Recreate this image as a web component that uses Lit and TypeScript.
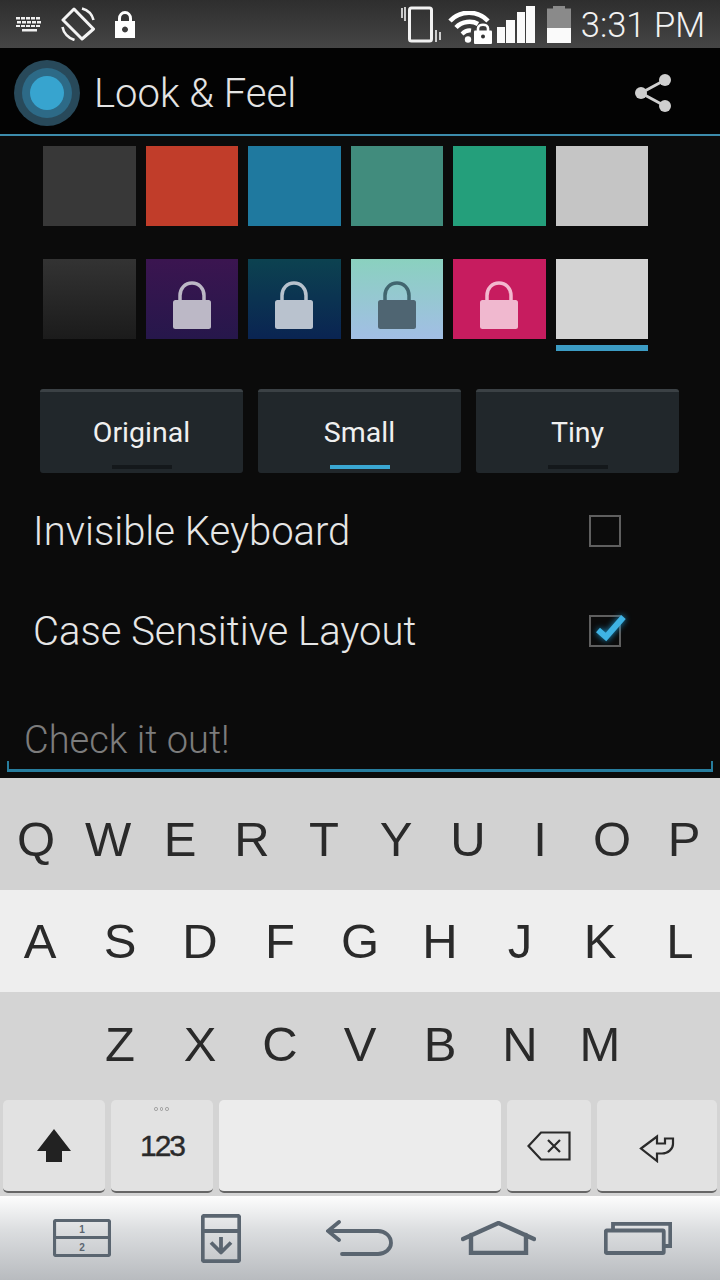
import { LitElement, html, css, svg } from "lit";
import { customElement } from "lit/decorators.js";

const lock = (cls: string) => html`<svg class="lock ${cls}" width="38" height="48" viewBox="0 0 38 48">
  <path class="shackle" d="M7 21V14.500C7 7.500 12 2 19 2S31 7.500 31 14.500V21" fill="none" stroke-width="3.500"/>
  <rect class="body" x="0" y="19" width="38" height="29" rx="2.500"/>
</svg>`;

const row1 = ["s-grey", "s-red", "s-blue", "s-teal", "s-green", "s-silver"];
const row2: [string, string][] = [
  ["g-dark", ""], ["g-purple", "l-purple"], ["g-navy", "l-navy"], ["g-aqua", "l-aqua"], ["g-pink", "l-pink"], ["g-light", ""],
];

@customElement("app-root")
export class AppRoot extends LitElement {
  static styles = css`
    :host { display: flex; flex-direction: column; width: 720px; height: 1280px; overflow: hidden; background: #0b0b0b; font-family: Roboto, sans-serif; }
    .status { height: 48px; flex: none; box-sizing: border-box; display: flex; align-items: center; padding: 0 15px 0 16px; background: linear-gradient(#2e2e2e, #454545); color: #fff; }
    .status svg { display: block; flex: none; }
    .st-rot { margin-left: 17px; } .st-lock { margin-left: 20px; }
    .st-spacer { flex: 1; }
    .st-wifi { margin-left: 7px; margin-top: 6px; } .st-sig { margin-left: 4px; } .st-bat { margin-left: 12px; }
    .time { margin-left: 10px; padding-top: 3px; font-size: 34.500px; font-weight: 300; line-height: 45px; white-space: nowrap; color: #f2f2f2; }
    .appbar { height: 86px; flex: none; box-sizing: border-box; display: flex; align-items: center; background: #030303; padding: 4px 46px 0 14px; }
    .rule { height: 2px; flex: none; background: #3c8bab; }
    .title { margin-left: 14px; font-size: 40px; font-weight: 300; color: #e4e4e4; flex: 1; white-space: nowrap; }
    .main { flex: none; height: 642px; box-sizing: border-box; padding-top: 10px; display: flex; flex-direction: column; background: #0b0b0b; }
    .swatches { display: grid; grid-template-columns: repeat(6, 92.500px); column-gap: 10px; row-gap: 33px; margin-left: 43px; }
    .sw { height: 80px; position: relative; display: flex; justify-content: center; align-items: flex-end; box-sizing: border-box; padding-bottom: 10px; }
    .s-grey { background: #383838; } .s-red { background: #c13d2a; } .s-blue { background: #1f799f; }
    .s-teal { background: #418c7d; } .s-green { background: #249f7b; } .s-silver { background: #c5c5c5; }
    .g-dark { background: linear-gradient(#333, #1b1b1b); }
    .g-purple { background: linear-gradient(#3b1550, #26174b); }
    .g-navy { background: linear-gradient(#0c4250, #0a2452); }
    .g-aqua { background: linear-gradient(#8ad1bf, #a2bee5); }
    .g-pink { background: #c71c5f; }
    .g-light { background: #d3d3d3; }
    .g-light::after { content: ""; position: absolute; left: 0; right: 0; top: 86px; height: 6px; background: #3c9cc4; }
    .lock { display: block; }
    .l-purple .shackle { stroke: #bcb8c6; } .l-purple .body { fill: #bcb8c6; }
    .l-navy .shackle { stroke: #b7c2cd; } .l-navy .body { fill: #b9c2ce; }
    .l-aqua .shackle { stroke: #41666f; } .l-aqua .body { fill: #4f6572; }
    .l-pink .shackle { stroke: #f3b8cf; } .l-pink .body { fill: #f0b8cf; }
    .sizes { display: grid; grid-template-columns: repeat(3, 203px); column-gap: 15px; margin: 50px 0 0 40px; }
    .size { height: 84px; box-sizing: border-box; background: #21272b; border-top: 3px solid #3b4145; border-radius: 3px; display: flex; flex-direction: column; align-items: center; color: #f0f0f0; font-size: 28.500px; font-weight: 400; }
    .size span { height: 73px; line-height: 82px; flex: none; }
    .size i { display: block; width: 60px; height: 4px; background: #14181b; }
    .size.on i { background: #3aa7d2; }
    .opt { height: 100px; display: flex; align-items: center; padding: 0 99px 0 33px; font-size: 40px; font-weight: 300; color: #e6e6e6; white-space: nowrap; }
    .opt-text { flex: 1; }
    .options { margin-top: 8px; }
    .cb { width: 32px; height: 32px; box-sizing: border-box; border: 2px solid #5f5f5f; position: relative; flex: none; }
    .cb svg { position: absolute; left: -2px; top: -10px; overflow: visible; filter: drop-shadow(0 0 3px #1b8fc4); }
    .edit { margin: auto 7px 6px; height: 58px; box-sizing: border-box; padding: 0 0 0 17px; font-size: 38px; font-weight: 300; color: #7c7c7c; line-height: 52px; position: relative; border-bottom: 3px solid #277d9e; }
    .edit::before, .edit::after { content: ""; position: absolute; bottom: 0; width: 2px; height: 8px; background: #277d9e; }
    .edit::before { left: 0; } .edit::after { right: 0; }
    .kb { flex: none; height: 418px; display: flex; flex-direction: column; background: #d4d4d4; font-family: "Liberation Sans", Arial, sans-serif; color: #2a2a2a; }
    .kr { display: grid; justify-items: center; align-items: center; font-size: 49px; }
    .kr1 { height: 112px; grid-template-columns: repeat(10, 72px); box-sizing: border-box; padding-top: 10px; background: #d2d2d2; }
    .kr2 { height: 102px; grid-template-columns: repeat(9, 80px); background: #eeeeee; }
    .kr3 { height: 103px; grid-template-columns: repeat(7, 80px); padding-left: 80px; }
    .kr4 { display: flex; gap: 6px; padding: 5px 3px 0; height: 96px; box-sizing: border-box; }
    .k { height: 93px; box-sizing: border-box; border-radius: 5px; background: #e2e2e2; border-bottom: 2px solid #666; display: flex; align-items: center; justify-content: center; position: relative; }
    .k svg { display: block; }
    .k1, .k2 { width: 102px; } .k3 { width: 282px; background: #ececec; } .k4 { width: 84px; } .k5 { width: 120px; }
    .num { font-size: 30px; letter-spacing: -2px; -webkit-text-stroke: 0.400px #2a2a2a; }
    .dots { position: absolute; top: 7px; left: 43px; display: flex; gap: 2px; }
    .dots b { width: 3.500px; height: 3.500px; box-sizing: border-box; border: 1px solid #999; border-radius: 50%; }
    .nav { flex: none; height: 84px; display: grid; grid-template-columns: repeat(5, 139px); padding-left: 12px; justify-items: center; align-items: center; background: linear-gradient(#fdfdfd 0%, #dcdee0 40%, #b8bbbf 100%); }
    .nav svg { display: block; }
    .nav text { font-family: "Liberation Sans", sans-serif; font-weight: 700; font-size: 10px; fill: #5a6570; }
  `;

  render() {
    const keys = (s: string) => [...s].map((c) => html`<span>${c}</span>`);
    return html`
      <div class="status">
        <svg width="28" height="16" viewBox="0 0 28 16" fill="#f0f0f0">
          ${[0, 5, 10, 15, 20].map((x) => svg`<rect x="${x}" y="1" width="4" height="2.500"/><rect x="${x + 1}" y="5" width="4" height="2.500"/><rect x="${x}" y="9" width="4" height="2"/>`)}
          <rect x="6" y="13" width="15" height="2.500"/>
        </svg>
        <svg class="st-rot" width="34" height="34" viewBox="0 0 34 34" fill="none" stroke="#f4f4f4">
          <path d="M13 2L32.500 22L21 32L2 13Z" stroke-width="3" stroke-linejoin="round"/>
          <path d="M21 1.500C26.500 3 31 7 32.500 13" stroke-width="2.600"/>
          <path d="M1.500 20C2.500 26 7.500 31 13.500 33" stroke-width="2.600"/>
        </svg>
        <svg class="st-lock" width="20" height="27" viewBox="0 0 20 27">
          <path d="M4.500 12V7.500C4.500 4 7 1.500 10 1.500S15.500 4 15.500 7.500V12" fill="none" stroke="#fff" stroke-width="3"/>
          <path fill-rule="evenodd" fill="#fff" d="M0 10H20V27H0ZM10 15.500a3 3 0 1 0 .01 0Z"/>
        </svg>
        <div class="st-spacer"></div>
        <svg width="41" height="38" viewBox="0 0 41 38" fill="none" stroke="#f2f2f2">
          <rect x="9.500" y="3" width="22" height="33" rx="2" stroke-width="3"/>
          <path d="M2 3V13M5 2V16" stroke-width="1.600"/>
          <path d="M36 25V37M40 27V35" stroke-width="1.600"/>
        </svg>
        <svg class="st-wifi" width="44" height="33" viewBox="0 0 44 33" fill="none" stroke="#fff">
          <path d="M2 10C12 -1 30 -1 40 10" stroke-width="4.500"/>
          <path d="M8 16.500C14 10 24 9.500 30 13" stroke-width="4.500"/>
          <path d="M14 23C17 20 20 19 23 19.500" stroke-width="4"/>
          <circle cx="20" cy="28.500" r="3.200" fill="#fff" stroke="none"/>
          <rect x="26" y="19.500" width="18" height="13.500" rx="1" fill="#fff" stroke="none"/>
          <path d="M30 21V17.500C30 12.500 40 12.500 40 17.500V21" stroke-width="2.600"/>
          <circle cx="35" cy="25.500" r="2" fill="#333" stroke="none"/>
        </svg>
        <svg class="st-sig" width="39" height="38" viewBox="0 0 39 38" fill="#fafafa">
          <rect x="1" y="22" width="8" height="16"/><rect x="10" y="15" width="9" height="23"/><rect x="21" y="7" width="8" height="31"/><rect x="30" y="1" width="9" height="37"/>
        </svg>
        <svg class="st-bat" width="24" height="38" viewBox="0 0 24 38">
          <path fill="#8a8a8a" d="M6 1H18V3.500H24V23H0V3.500H6Z"/>
          <rect y="23" width="24" height="15" fill="#fafafa"/>
        </svg>
        <div class="time">3:31 PM</div>
      </div>

      <div class="appbar">
        <svg width="66" height="66" viewBox="0 0 66 66">
          <circle cx="33" cy="33" r="33" fill="#28495a"/>
          <circle cx="33" cy="33" r="25" fill="#2d6a87"/>
          <circle cx="33" cy="33" r="17" fill="#37a4cf"/>
        </svg>
        <div class="title">Look &amp; Feel</div>
        <svg width="40" height="40" viewBox="0 0 40 40" fill="#cfcfcf" stroke="#cfcfcf">
          <path d="M7 20L31 7M7 20L31 33" stroke-width="3" fill="none"/>
          <circle cx="7" cy="20" r="6" stroke="none"/><circle cx="31" cy="7" r="6" stroke="none"/><circle cx="31" cy="33" r="6" stroke="none"/>
        </svg>
      </div>
      <div class="rule"></div>

      <div class="main">
        <div class="swatches">
          ${row1.map((c) => html`<div class="sw ${c}"></div>`)}
          ${row2.map(([c, l]) => html`<div class="sw ${c}">${l ? lock(l) : ""}</div>`)}
        </div>
        <div class="sizes">
          <div class="size"><span>Original</span><i></i></div>
          <div class="size on"><span>Small</span><i></i></div>
          <div class="size"><span>Tiny</span><i></i></div>
        </div>
        <div class="options">
          <div class="opt"><span class="opt-text">Invisible Keyboard</span><div class="cb"></div></div>
          <div class="opt"><span class="opt-text">Case Sensitive Layout</span>
            <div class="cb">
              <svg width="36" height="34" viewBox="0 0 36 34"><path d="M9 23L17 30L34.500 10" fill="none" stroke="#3fb3e4" stroke-width="6"/></svg>
            </div>
          </div>
        </div>
        <div class="edit">Check it out!</div>
      </div>

      <div class="kb">
        <div class="kr kr1">${keys("QWERTYUIOP")}</div>
        <div class="kr kr2">${keys("ASDFGHJKL")}</div>
        <div class="kr kr3">${keys("ZXCVBNM")}</div>
        <div class="kr4">
          <div class="k k1"><svg width="34" height="34" viewBox="0 0 34 34"><path fill="#222" d="M17 0L34 22H25V33H9V22H0Z"/></svg></div>
          <div class="k k2"><div class="dots"><b></b><b></b><b></b></div><span class="num">123</span></div>
          <div class="k k3"></div>
          <div class="k k4"><svg width="44" height="30" viewBox="0 0 44 30" fill="none" stroke="#2a2a2a" stroke-width="2.200"><path d="M14 1.500H42.500V28.500H14L1.500 15Z"/><path d="M21 9L33 21M33 9L21 21"/></svg></div>
          <div class="k k5"><svg width="36" height="34" viewBox="0 0 36 34" fill="none" stroke="#2a2a2a" stroke-width="2.200"><path d="M2 19.500L18 7.500V14.500H26V9.500H34V15C34 20 29 24.500 23 24.500H18V32Z"/></svg></div>
        </div>
      </div>

      <div class="nav">
        <svg width="58" height="38" viewBox="0 0 58 38" fill="none" stroke="#5a6570" stroke-width="3.200">
          <rect x="1.500" y="1.500" width="55" height="35" rx="1.500"/><path d="M1.500 18.500H56.500"/>
          <text x="29" y="14" text-anchor="middle" stroke="none">1</text><text x="29" y="32" text-anchor="middle" stroke="none">2</text>
        </svg>
        <svg width="40" height="49" viewBox="0 0 40 49" fill="none" stroke="#5a6570" stroke-width="3.800" stroke-linejoin="round">
          <rect x="1.750" y="1.750" width="36.500" height="45.500" rx="2"/><path d="M1.750 17H38.250"/>
          <path d="M20 23V38M10 28.500L20 38.500L30 28.500"/>
        </svg>
        <svg width="67" height="36" viewBox="0 0 67 36" fill="none" stroke="#5a6570" stroke-width="3.800" stroke-linecap="round">
          <path d="M13 2L2 11L13 20M3 11H52C59 11 65 16 65 23C65 29 59 34 52 34H16"/>
        </svg>
        <svg width="75" height="34" viewBox="0 0 75 34" fill="none" stroke="#5a6570" stroke-width="4.400" stroke-linecap="round">
          <path d="M2 18L37.500 2L73 18M10 14V32H65V14"/>
        </svg>
        <svg width="68" height="33" viewBox="0 0 68 33" fill="none" stroke="#5a6570" stroke-width="3.800">
          <rect x="1.750" y="8.500" width="58" height="22.500" rx="1"/><path d="M9 7V1.750H66.250V24H60"/>
        </svg>
      </div>
    `;
  }
}
